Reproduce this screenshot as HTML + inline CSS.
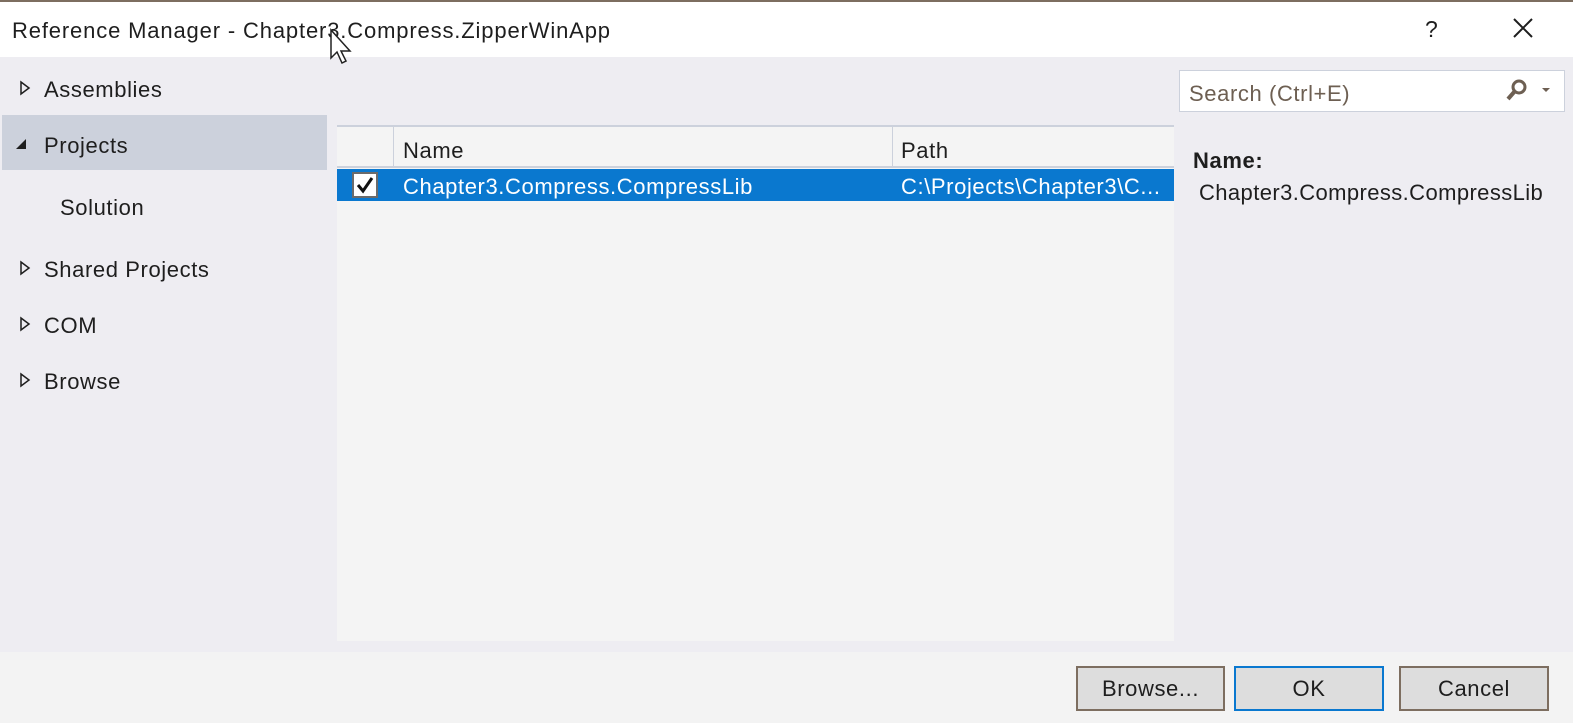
<!DOCTYPE html>
<html><head><style>
*{margin:0;padding:0;box-sizing:border-box}
body{width:1573px;height:723px;overflow:hidden;background:#eeedf2;font-family:"Liberation Sans",sans-serif;color:#1e1e1e;position:relative;font-size:22px;letter-spacing:0.6px}
.a{position:absolute;white-space:nowrap}
.btn{position:absolute;top:666px;height:45px;background:#dddddd;border:2px solid #7d6e60;text-align:center;line-height:41px;font-size:22px;color:#1e1e1e}
</style></head><body>
<div class="a" style="left:0;top:0;width:1573px;height:57px;background:#fff;border-top:2px solid #7d6e60"></div>
<div class="a" style="left:12px;top:18px;letter-spacing:0.85px">Reference Manager - Chapter3.Compress.ZipperWinApp</div>
<div class="a" style="left:1425px;top:16px;font-size:23px">?</div>
<svg class="a" style="left:1512px;top:17px" width="22" height="22"><path d="M2 2L20 20M20 2L2 20" stroke="#1e1e1e" stroke-width="2"/></svg>
<svg class="a" style="left:329px;top:28px" width="26" height="38"><path d="M2 2L2 30L8 24L13 35L17 33L12 23L21 23Z" fill="#fff" stroke="#222" stroke-width="1.5"/></svg>

<div class="a" style="left:2px;top:115px;width:325px;height:55px;background:#ccd1dc"></div>
<svg class="a" style="left:19px;top:80px" width="12" height="16"><path d="M2 2L10 8L2 14Z" fill="none" stroke="#1e1e1e" stroke-width="1.5"/></svg>
<div class="a" style="left:44px;top:77px">Assemblies</div>
<svg class="a" style="left:14px;top:137px" width="14" height="14"><path d="M12 2L12 12L2 12Z" fill="#1e1e1e"/></svg>
<div class="a" style="left:44px;top:133px">Projects</div>
<div class="a" style="left:60px;top:195px">Solution</div>
<svg class="a" style="left:19px;top:260px" width="12" height="16"><path d="M2 2L10 8L2 14Z" fill="none" stroke="#1e1e1e" stroke-width="1.5"/></svg>
<div class="a" style="left:44px;top:257px">Shared Projects</div>
<svg class="a" style="left:19px;top:316px" width="12" height="16"><path d="M2 2L10 8L2 14Z" fill="none" stroke="#1e1e1e" stroke-width="1.5"/></svg>
<div class="a" style="left:44px;top:313px">COM</div>
<svg class="a" style="left:19px;top:372px" width="12" height="16"><path d="M2 2L10 8L2 14Z" fill="none" stroke="#1e1e1e" stroke-width="1.5"/></svg>
<div class="a" style="left:44px;top:369px">Browse</div>

<div class="a" style="left:337px;top:125px;width:837px;height:516px;background:#f4f4f4"></div>
<div class="a" style="left:337px;top:125px;width:837px;height:2px;background:#ccd1dc"></div>
<div class="a" style="left:393px;top:127px;width:1px;height:40px;background:#ccd1dc"></div>
<div class="a" style="left:892px;top:127px;width:1px;height:40px;background:#ccd1dc"></div>
<div class="a" style="left:337px;top:166px;width:837px;height:2px;background:#ccd1dc"></div>
<div class="a" style="left:403px;top:138px">Name</div>
<div class="a" style="left:901px;top:138px">Path</div>
<div class="a" style="left:337px;top:169px;width:837px;height:32px;background:#0a78cf"></div>
<div class="a" style="left:352px;top:172px;width:26px;height:26px;background:#fff;border:2px solid #6b6b6b"></div>
<svg class="a" style="left:355px;top:175px" width="20" height="20"><path d="M3 10L8 16L17 3" fill="none" stroke="#111" stroke-width="3"/></svg>
<div class="a" style="left:403px;top:174px;color:#fff">Chapter3.Compress.CompressLib</div>
<div class="a" style="left:901px;top:174px;color:#fff">C:\Projects\Chapter3\C...</div>

<div class="a" style="left:1179px;top:70px;width:386px;height:42px;background:#fff;border:1px solid #ccd1dc"></div>
<div class="a" style="left:1189px;top:81px;color:#6d5f52">Search (Ctrl+E)</div>
<svg class="a" style="left:1504px;top:78px" width="26" height="26"><circle cx="15" cy="9" r="6" fill="none" stroke="#6d5f52" stroke-width="3"/><path d="M11 13L4 21" stroke="#6d5f52" stroke-width="4"/></svg>
<svg class="a" style="left:1541px;top:86px" width="10" height="8"><path d="M1 2L9 2L5 6Z" fill="#6d5f52"/></svg>
<div class="a" style="left:1193px;top:148px;font-weight:bold;color:#1e1e1e">Name:</div>
<div class="a" style="left:1199px;top:180px;letter-spacing:0.4px">Chapter3.Compress.CompressLib</div>

<div class="a" style="left:0;top:652px;width:1573px;height:71px;background:#f3f3f3"></div>
<div class="btn" style="left:1076px;width:149px">Browse...</div>
<div class="btn" style="left:1234px;width:150px;border-color:#0a78cf">OK</div>
<div class="btn" style="left:1399px;width:150px">Cancel</div>
</body></html>
